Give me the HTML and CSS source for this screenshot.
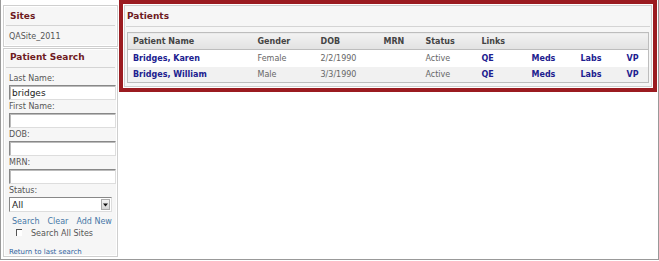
FILE: index.html
```html
<!DOCTYPE html>
<html lang="en">

<head>
  <meta charset="UTF-8">
  <title>Patients</title>
  <link rel="stylesheet" href="styles.css">
</head>

<body>
  <div class="frame">
    <div class="sidebar">
      <div class="box sites">
        <h2 class="box-title">Sites</h2>
        <div class="site">QASite_2011</div>
      </div>
      <div class="box search">
        <h2 class="box-title">Patient Search</h2>
        <label class="lbl first">Last Name:</label>
        <input class="field" type="text" value="bridges">
        <label class="lbl">First Name:</label>
        <input class="field" type="text">
        <label class="lbl">DOB:</label>
        <input class="field" type="text">
        <label class="lbl">MRN:</label>
        <input class="field" type="text">
        <label class="lbl">Status:</label>
        <div class="select">
          <span>All</span>
          <span class="arrow"><svg width="5" height="4" viewBox="0 0 5 4"><path d="M0 0.5h5L2.5 3.5z" fill="#111"/></svg></span>
        </div>
        <div class="actions">
          <a href="#">Search</a>
          <a href="#">Clear</a>
          <a href="#">Add New</a>
        </div>
        <label class="check"><span class="checkbox"></span>Search All Sites</label>
        <a class="return" href="#">Return to last search</a>
      </div>
    </div>

    <div class="highlight">
      <div class="panel">
        <h2 class="panel-title">Patients</h2>
        <table class="grid">
          <colgroup>
            <col style="width: 125px">
            <col style="width: 63px">
            <col style="width: 63px">
            <col style="width: 42px">
            <col style="width: 56px">
            <col style="width: 50px">
            <col style="width: 49px">
            <col style="width: 46px">
            <col style="width: 27px">
          </colgroup>
          <thead>
            <tr>
              <th>Patient Name</th>
              <th>Gender</th>
              <th>DOB</th>
              <th>MRN</th>
              <th>Status</th>
              <th colspan="4">Links</th>
            </tr>
          </thead>
          <tbody>
            <tr>
              <td><a href="#">Bridges, Karen</a></td>
              <td>Female</td>
              <td>2/2/1990</td>
              <td></td>
              <td>Active</td>
              <td><a href="#">QE</a></td>
              <td><a href="#">Meds</a></td>
              <td><a href="#">Labs</a></td>
              <td><a href="#">VP</a></td>
            </tr>
            <tr class="alt">
              <td><a href="#">Bridges, William</a></td>
              <td>Male</td>
              <td>3/3/1990</td>
              <td></td>
              <td>Active</td>
              <td><a href="#">QE</a></td>
              <td><a href="#">Meds</a></td>
              <td><a href="#">Labs</a></td>
              <td><a href="#">VP</a></td>
            </tr>
          </tbody>
        </table>
      </div>
    </div>
  </div>
</body>

</html>
```
FILE: styles.css
```css
* {
  margin: 0;
  padding: 0;
  box-sizing: border-box;
}

body {
  font-family: "DejaVu Sans", Verdana, sans-serif;
  font-size: 8px;
  color: #444;
  background: #fff;
}

.frame {
  display: flex;
  gap: 1px;
  width: 659px;
  height: 260px;
  padding: 0 1px 2px 2px;
  border: 1px solid #999;
  border-top: none;
}

/* left column */
.sidebar {
  width: 115px;
  padding-top: 5px;
  display: flex;
  flex-direction: column;
  gap: 1px;
}

.box {
  border: 1px solid #cfcfcf;
  background: #f6f6f6;
  box-shadow: inset 0 0 0 1px #fff;
}

.box-title {
  margin: 0 2px;
  padding: 5px 0 0 4px;
  height: 20px;
  font-size: 9px;
  font-weight: bold;
  color: #6e1a1f;
  border-bottom: 1px solid #d4d4d4;
}

.sites {
  height: 42px;
}

.site {
  padding: 6px 0 0 5px;
  color: #555;
}

.search {
  flex: 1;
  display: flex;
  flex-direction: column;
  padding-left: 5px;
}

.search .box-title {
  margin-left: -3px;
  height: 19px;
  padding-top: 3px;
}

.lbl {
  display: block;
  margin-top: 1px;
  line-height: 12px;
  color: #555;
}

.lbl.first {
  margin-top: 5px;
}

.field {
  display: block;
  width: 107px;
  height: 15px;
  border: 1px solid #888;
  border-right-color: #ddd;
  border-bottom-color: #ddd;
  box-shadow: inset 1px 1px 0 #bbb;
  background: #fff;
  font: 9px "DejaVu Sans", sans-serif;
  color: #222;
  padding: 1px 2px 0;
}

.select {
  display: flex;
  justify-content: space-between;
  align-items: center;
  width: 103px;
  height: 15px;
  border: 1px solid #888;
  border-right-color: #ddd;
  border-bottom-color: #ddd;
  background: #fff;
  padding-left: 2px;
  font-size: 9px;
  color: #222;
}

.arrow {
  display: flex;
  align-items: center;
  justify-content: center;
  width: 9px;
  height: 11px;
  margin-right: 1px;
  background: linear-gradient(#f4f4f4, #d6d6d6);
  border: 1px solid #aaa;
}

.actions {
  display: flex;
  gap: 8px;
  margin: 5px 0 0 3px;
}

.actions a,
.return {
  color: #4677a6;
  text-decoration: none;
}

.check {
  display: flex;
  align-items: center;
  gap: 9px;
  margin: 3px 0 0 7px;
  color: #555;
}

.checkbox {
  width: 6px;
  height: 7px;
  margin-top: -3px;
  border-top: 1px solid #555;
  border-left: 1px solid #555;
  background: #fff;
}

.return {
  margin: 10px 0 0 0;
  font-size: 7px;
  color: #2f62a0;
}

/* patients panel */
.highlight {
  align-self: flex-start;
  width: 538px;
  height: 92px;
  border: 4px solid #9b1b20;
  padding: 1px;
  background: #fff;
}

.panel {
  height: 100%;
  border: 1px solid #cfcfcf;
  background: #f6f6f6;
  padding: 0 2px;
}

.panel-title {
  height: 21px;
  padding: 5px 0 0 1px;
  font-size: 9px;
  font-weight: bold;
  color: #6e1a1f;
  border-bottom: 1px solid #d4d4d4;
  margin: 0 -1px;
}

.grid {
  margin-top: 5px;
  width: 522px;
  border-collapse: collapse;
  border: 1px solid #bdbdbd;
  table-layout: fixed;
}

.grid th,
.grid td {
  text-align: left;
  padding: 0 0 0 5px;
  white-space: nowrap;
}

.grid th {
  height: 17px;
  font-weight: bold;
  color: #444;
  background: linear-gradient(#f2f2f2, #e2e2e2);
  border-bottom: 1px solid #bdbdbd;
}

.grid td {
  height: 17px;
  background: #fff;
  color: #666;
}

.grid .alt td {
  height: 16px;
  background: #f1f1f1;
}

.grid td a {
  color: #20208f;
  font-weight: bold;
  text-decoration: none;
}
```
